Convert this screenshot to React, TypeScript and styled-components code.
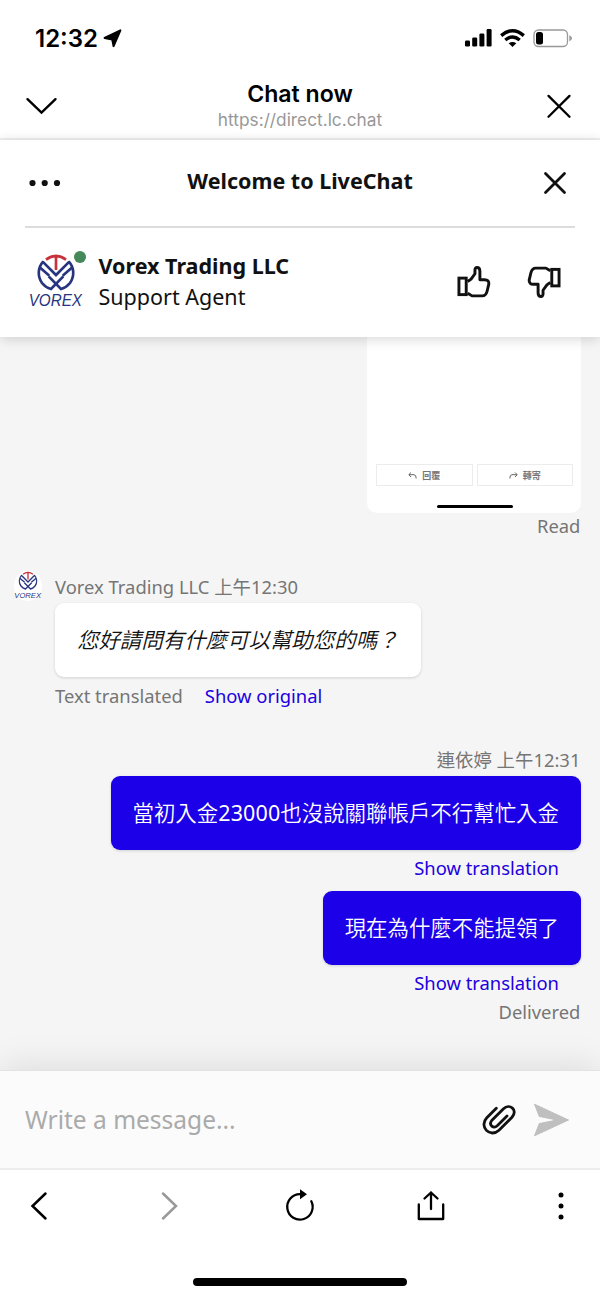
import React from "react";
import styled, { createGlobalStyle } from "styled-components";

const Global = createGlobalStyle`
  * { box-sizing: border-box; }
  body { margin: 0; background: #fff; }
  button { border: 0; padding: 0; background: none; color: inherit; font: inherit; display: block; }
`;

const uiFont = `Inter, "Noto Sans CJK TC", sans-serif`;
const chatFont = `"Noto Sans", "Noto Sans CJK TC", sans-serif`;

const Screen = styled.main`
  width: 600px;
  height: 1298px;
  display: flex;
  flex-direction: column;
  background: #fff;
  overflow: hidden;
  font-family: ${uiFont};
`;

const Icon = styled.svg`
  display: block;
  flex: none;
  overflow: visible;
`;

const StatusBar = styled.header`
  height: 75px;
  padding: 1px 28px 0 35px;
  display: flex;
  align-items: center;
  justify-content: space-between;
  color: #000;
`;

const Clock = styled.div`
  display: flex;
  align-items: center;
  gap: 5px;
  padding-top: 1px;
  font-size: 24px;
  font-weight: 600;
  line-height: 30px;
`;

const StatusIcons = styled.div`
  display: flex;
  align-items: center;
  gap: 8px;
`;

const BrowserBar = styled.div`
  height: 65px;
  padding: 0 28px 0 26px;
  display: flex;
  align-items: center;
  justify-content: space-between;
  border-bottom: 2px solid #f0f0f0;
`;

const PageInfo = styled.div`
  text-align: center;
  padding: 0 3px 1px 0;
`;

const PageTitle = styled.div`
  font-size: 23.1px;
  font-weight: 600;
  line-height: 27px;
  color: #000;
`;

const PageUrl = styled.div`
  font-size: 17.3px;
  line-height: 24px;
  color: #989898;
`;

const ChatHeader = styled.section`
  position: relative;
  z-index: 1;
  height: 197px;
  padding: 0 25px;
  background: #fff;
  color: #111;
  font-family: ${chatFont};
  box-shadow: 0 2px 12px rgba(0, 0, 20, 0.16);
`;

const TitleRow = styled.div`
  height: 88px;
  padding: 0 9px 0 4px;
  display: flex;
  align-items: center;
  justify-content: space-between;
  border-bottom: 2px solid #dcdcdc;
`;

const ChatTitle = styled.h1`
  margin: 0;
  padding: 0 5px 4px 0;
  font-size: 21.5px;
  line-height: 30px;
  font-weight: 700;
`;

const AgentRow = styled.div`
  height: 105px;
  padding: 0 14.5px 0 3px;
  display: flex;
  align-items: center;
`;

const Avatar = styled.div`
  position: relative;
  width: 56px;
  height: 56px;
  margin-right: 14.5px;
`;

const OnlineDot = styled.span`
  position: absolute;
  top: -2px;
  right: -2px;
  width: 12px;
  height: 12px;
  border-radius: 50%;
  background: #45885a;
`;

const AgentText = styled.div`
  flex: 1;
  font-size: 21.5px;
  line-height: 31px;
`;

const Ratings = styled.div`
  display: flex;
  gap: 38px;
  padding-top: 3px;
`;

const Feed = styled.section`
  height: 733px;
  padding: 0 19px 0 14px;
  display: flex;
  flex-direction: column;
  background: #f5f5f5;
  font-family: ${chatFont};
`;

const Attachment = styled.div`
  align-self: flex-end;
  width: 214px;
  height: 176px;
  padding: 127px 8px 0 9px;
  border-radius: 0 0 10px 10px;
  background: #fff;
`;

const MailActions = styled.div`
  display: flex;
  gap: 4px;
`;

const MailAction = styled.div`
  flex: 1;
  height: 22px;
  display: flex;
  align-items: center;
  justify-content: center;
  gap: 5px;
  border: 1.5px solid #ececec;
  font-family: "Noto Sans CJK TC", sans-serif;
  font-size: 9px;
  line-height: 17px;
  font-weight: 700;
  color: #777;
`;

const HomeIndicator = styled.div<{ $w: number; $h: number; $top: number }>`
  width: ${(p) => p.$w}px;
  height: ${(p) => p.$h}px;
  margin: ${(p) => p.$top}px auto 0;
  border-radius: 5px;
  background: #000;
`;

const Line = styled.div<{ $top?: number; $right?: number; $own?: boolean }>`
  height: 26px;
  margin-top: ${(p) => p.$top ?? 0}px;
  padding-right: ${(p) => p.$right ?? 0.6}px;
  padding-left: ${(p) => (p.$own ? 0 : 41)}px;
  display: flex;
  align-items: flex-start;
  justify-content: ${(p) => (p.$own ? "flex-end" : "flex-start")};
  gap: 22px;
  font-size: 18.4px;
  line-height: 25px;
  white-space: nowrap;
  color: #757575;
`;

const Sender = styled(Line)`
  padding-left: 0;
  gap: 13px;
  align-items: center;
`;

const SmallAvatar = styled.div`
  width: 28px;
  height: 30px;
  margin-top: -1px;
  border-radius: 50%;
  background: #fff;
`;

const Link = styled.button`
  color: #2000e0;
`;

const Bubble = styled.div<{ $own?: boolean; $top: number }>`
  align-self: ${(p) => (p.$own ? "flex-end" : "flex-start")};
  height: 74px;
  margin: ${(p) => p.$top}px 0 0 ${(p) => (p.$own ? 0 : 41)}px;
  padding: 0 22px;
  border-radius: 9px;
  background: ${(p) => (p.$own ? "#1c00e8" : "#fff")};
  color: ${(p) => (p.$own ? "#fff" : "#111")};
  font-size: 21.45px;
  font-style: ${(p) => (p.$own ? "normal" : "italic")};
  font-weight: 350;
  line-height: 73px;
  white-space: nowrap;
  box-shadow: 0 1px 3px rgba(0, 0, 0, 0.15);
`;

const Amount = styled.span`
  font-weight: 400;
  letter-spacing: 0.15px;
`;

const Composer = styled.section`
  position: relative;
  height: 100px;
  padding: 0 31px 0 25px;
  display: flex;
  align-items: center;
  background: #fbfbfb;
  border-top: 1px solid #e2e2e4;
  border-bottom: 2px solid #ededed;
  font-family: ${chatFont};
  box-shadow: 0 -4px 36px rgba(0, 0, 20, 0.1);
  z-index: 1;
`;

const Placeholder = styled.div`
  flex: 1;
  font-size: 24.5px;
  color: #aaa;
`;

const BottomBar = styled.nav`
  position: relative;
  z-index: 2;
  height: 128px;
  padding-bottom: 12px;
  background: #fff;
`;

const NavButtons = styled.div`
  height: 72px;
  padding: 0 19px;
  display: flex;
  align-items: center;
  justify-content: space-between;
`;

const NavButton = styled.button`
  && {
    width: 40px;
    height: 40px;
    display: flex;
    align-items: center;
    justify-content: center;
  }
`;

function Logo({ size }: { size: number }) {
  return (
    <Icon width={size} height={size} viewBox="84 336 168 168" fill="none" strokeWidth="8">
      <g stroke="#27347f">
        <path d="M130 361C113 379 112 406 126 426Q136 439 153 444L190 406" />
        <path d="M206 361C223 379 224 406 210 426Q200 439 183 444L146 406" />
        <path d="M128 362L168 402L208 362" />
        <path d="M119 379L148 404M217 379L188 404" />
      </g>
      <path d="M138 356Q168 333 198 356M168 346V387" stroke="#c8323a" />
      <text
        x="86"
        y="496"
        textLength="160"
        lengthAdjust="spacingAndGlyphs"
        fill="#27347f"
        fontFamily="Liberation Sans, sans-serif"
        fontStyle="italic"
        fontSize="48"
      >
        VOREX
      </text>
    </Icon>
  );
}

const thumbPath =
  "M11 15.5L14.5 13L18.5 7.5V3.5Q18.8 1 20.5 1Q23.6 1 23.6 5V13.6H28.5Q33 13.6 32.8 18L31 25.5Q29.8 30.3 26 30.3H15.5L11 27.5";

function Thumb({ down }: { down?: boolean }) {
  return (
    <Icon width="33" height="32" viewBox="0 0 34 32" fill="none" stroke="#111" strokeWidth="3" strokeLinejoin="round">
      <g transform={down ? "rotate(180 17 16)" : undefined}>
        <rect x="2" y="12" width="7.5" height="17" strokeLinejoin="miter" />
        <path d={thumbPath} />
      </g>
    </Icon>
  );
}

export default function App() {
  return (
    <Screen>
      <Global />
      <StatusBar>
        <Clock>
          12:32
          <Icon width="19" height="19" viewBox="0 0 19 19">
            <path
              d="M1.6 9L17.4 1.4L10.6 17.2L9.2 10.4Z"
              stroke="#000"
              strokeWidth="2"
              strokeLinejoin="round"
            />
          </Icon>
        </Clock>
        <StatusIcons>
          <Icon width="27" height="18" viewBox="0 0 27 18">
            <rect x="0" y="11.5" width="5" height="6" rx="1.3" />
            <rect x="7.2" y="8.5" width="5" height="9" rx="1.3" />
            <rect x="14.4" y="4.5" width="5" height="13" rx="1.3" />
            <rect x="21.6" y="0" width="5" height="17.5" rx="1.3" />
          </Icon>
          <Icon width="25" height="18" viewBox="0 0 25 18" fill="none" stroke="#000" strokeWidth="3.4">
            <path d="M1.2 6.6Q12.5 -3.3 23.8 6.6" />
            <path d="M5.3 11Q12.5 5 19.7 11" />
            <path d="M8.7 14.3Q12.5 11.6 16.3 14.3L12.5 18Z" fill="#000" stroke="none" />
          </Icon>
          <Icon width="39" height="19" viewBox="0 0 39 19">
            <rect x="1" y="1" width="33.5" height="16.5" rx="4.5" fill="none" stroke="#999" strokeWidth="1.3" />
            <rect x="3" y="3" width="7" height="12.5" rx="2.5" />
            <path d="M36.3 6.3Q39 7.5 39 9.3T36.3 12.3Z" fill="#999" />
          </Icon>
        </StatusIcons>
      </StatusBar>

      <BrowserBar>
        <Icon width="31" height="17" viewBox="0 0 31 17" fill="none" stroke="#000" strokeWidth="2.4" strokeLinecap="round">
          <path d="M1.5 1.2L15.5 14.5L29.5 1.2" />
        </Icon>
        <PageInfo>
          <PageTitle>Chat now</PageTitle>
          <PageUrl>https://direct.lc.chat</PageUrl>
        </PageInfo>
        <Icon width="26" height="24" viewBox="0 0 26 24" fill="none" stroke="#000" strokeWidth="2.3" strokeLinecap="round">
          <path d="M2.5 0.9L23.5 21.7M23.5 0.9L2.5 21.7" />
        </Icon>
      </BrowserBar>

      <ChatHeader>
        <TitleRow>
          <Icon width="32" height="8" viewBox="0 0 32 8" fill="#111">
            <circle cx="3.5" cy="4" r="3.1" />
            <circle cx="15.7" cy="4" r="3.1" />
            <circle cx="28" cy="4" r="3.1" />
          </Icon>
          <ChatTitle>Welcome to LiveChat</ChatTitle>
          <Icon width="22" height="22" viewBox="0 0 22 22" fill="none" stroke="#111" strokeWidth="2.8" strokeLinecap="round">
            <path d="M1.5 1.5L20.5 20.5M20.5 1.5L1.5 20.5" />
          </Icon>
        </TitleRow>
        <AgentRow>
          <Avatar>
            <Logo size={56} />
            <OnlineDot />
          </Avatar>
          <AgentText>
            <strong>Vorex Trading LLC</strong>
            <br />
            Support Agent
          </AgentText>
          <Ratings>
            <Thumb />
            <Thumb down />
          </Ratings>
        </AgentRow>
      </ChatHeader>

      <Feed>
        <Attachment>
          <MailActions>
            <MailAction>
              <Icon width="9" height="7" viewBox="0 0 9 7" fill="none" stroke="#666">
                <path d="M3 .5L.8 2.7L3 5M1 2.7H6Q8.2 2.7 8.2 6.5" />
              </Icon>
              回覆
            </MailAction>
            <MailAction>
              <Icon width="9" height="7" viewBox="0 0 9 7" fill="none" stroke="#666">
                <path d="M6 .5L8.2 2.7L6 5M8 2.7H3Q.8 2.7 .8 6.5" />
              </Icon>
              轉寄
            </MailAction>
          </MailActions>
          <HomeIndicator $w={76} $h={3} $top={19} />
        </Attachment>
        <Line $own>Read</Line>

        <Sender $top={34}>
          <SmallAvatar>
            <Logo size={28} />
          </SmallAvatar>
          Vorex Trading LLC 上午12:30
        </Sender>
        <Bubble $top={4}>您好請問有什麼可以幫助您的嗎？</Bubble>
        <Line $top={6}>
          Text translated <Link>Show original</Link>
        </Line>

        <Line $own $top={38}>連依婷 上午12:31</Line>
        <Bubble $own $top={3}>
          當初入金<Amount>23000</Amount>也沒說關聯帳戶不行幫忙入金
        </Bubble>
        <Line $own $top={5} $right={22}>
          <Link>Show translation</Link>
        </Line>
        <Bubble $own $top={10}>現在為什麼不能提領了</Bubble>
        <Line $own $top={5} $right={22}>
          <Link>Show translation</Link>
        </Line>
        <Line $own $top={3}>Delivered</Line>
      </Feed>

      <Composer>
        <Placeholder>Write a message...</Placeholder>
        <Icon width="34" height="30" viewBox="0 0 34 30" fill="none" stroke="#111" strokeWidth="2.8" strokeLinecap="round">
          <path d="M14.3 3.2L4.8 12.7C-3.5 21.5 8 33.5 17 25.2L30 12.2C36.5 5 27.5 -2 21.5 3.7L10 15.2C6 20 11.5 24.3 15.5 20.5L25 11" />
        </Icon>
        <Icon width="36" height="34" viewBox="0 0 36 34" style={{ marginLeft: 17 }}>
          <path d="M1.5 1.2L35.5 17L1.5 32.8L6.3 20.6L24 17L6.3 13.4Z" fill="#bfbfbf" stroke="#bfbfbf" strokeLinejoin="round" />
        </Icon>
      </Composer>

      <BottomBar>
        <NavButtons>
          <NavButton>
            <Icon width="16" height="28" viewBox="0 0 16 28" fill="none" stroke="#000" strokeWidth="2.5" strokeLinecap="round">
              <path d="M14.5 1.5L1.5 14L14.5 26.5" />
            </Icon>
          </NavButton>
          <NavButton>
            <Icon width="16" height="28" viewBox="0 0 16 28" fill="none" stroke="#999" strokeWidth="2.5" strokeLinecap="round">
              <path d="M1 1.5L14 14L1 26.5" />
            </Icon>
          </NavButton>
          <NavButton>
            <Icon width="28" height="32" viewBox="0 0 28 32" fill="none" stroke="#000" strokeWidth="2.3" strokeLinecap="round">
              <path d="M15 4.2H14A12.7 12.7 0 1 0 25.3 11.2" />
              <path d="M14 -.8L21 4.2L14 9.2Z" fill="#000" stroke="none" />
            </Icon>
          </NavButton>
          <NavButton>
            <Icon width="28" height="30" viewBox="0 0 28 30" fill="none" stroke="#000" strokeWidth="2.3" strokeLinecap="round" strokeLinejoin="round">
              <path d="M1.8 13.5V28H26.2V13.5M14 18V1.5M7.5 7.5L14 1.5L20.5 7.5" />
            </Icon>
          </NavButton>
          <NavButton>
            <Icon width="6" height="28" viewBox="0 0 6 28">
              <circle cx="3" cy="3" r="2.5" />
              <circle cx="3" cy="14" r="2.5" />
              <circle cx="3" cy="25" r="2.5" />
            </Icon>
          </NavButton>
        </NavButtons>
        <HomeIndicator $w={214} $h={8} $top={36} />
      </BottomBar>
    </Screen>
  );
}
